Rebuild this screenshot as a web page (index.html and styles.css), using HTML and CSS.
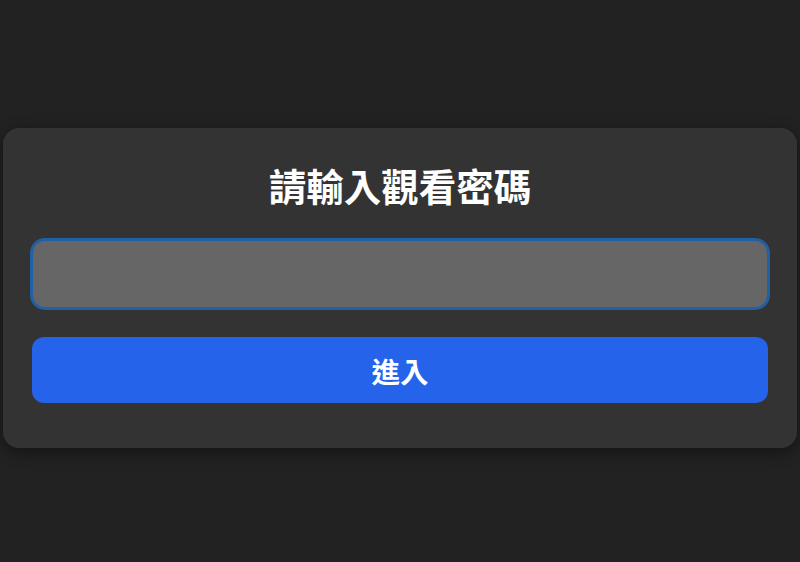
FILE: index.html
```html
<!DOCTYPE html>
<html lang="zh-Hant">
<head>
<meta charset="utf-8">
<link rel="stylesheet" href="styles.css">
</head>
<body>
<div class="card">
  <h1 class="title">請輸入觀看密碼</h1>
  <input class="pw" type="password">
  <button class="enter">進入</button>
</div>
</body>
</html>
```
FILE: styles.css
```css
html, body { margin: 0; padding: 0; }
body {
  background: #222222;
  font-family: "Noto Sans CJK TC", "Noto Sans", sans-serif;
  width: 800px;
  height: 562px;
  overflow: hidden;
}
.card {
  margin: 128px 3px 0;
  height: 320px;
  box-sizing: border-box;
  padding: 34px 27px 45px;
  background: #333333;
  border-radius: 16px;
  box-shadow: 0 4px 16px rgba(0,0,0,0.45);
  display: flex;
  flex-direction: column;
}
.title {
  margin: 0 0 30px;
  height: 46px;
  line-height: 46px;
  font-size: 37.5px;
  font-weight: 700;
  color: #ffffff;
  text-align: center;
}
.pw {
  display: block;
  box-sizing: border-box;
  width: 100%;
  height: 72px;
  margin: 0;
  background: #666666;
  border: 3px solid #2160a6;
  border-radius: 15px;
  outline: none;
}
.enter {
  display: block;
  margin: 27px 2px 0;
  height: 66px;
  border: none;
  border-radius: 12px;
  background: #2563eb;
  color: #ffffff;
  font-family: "Noto Sans CJK TC", "Noto Sans", sans-serif;
  font-size: 28.5px;
  font-weight: 700;
}
```
